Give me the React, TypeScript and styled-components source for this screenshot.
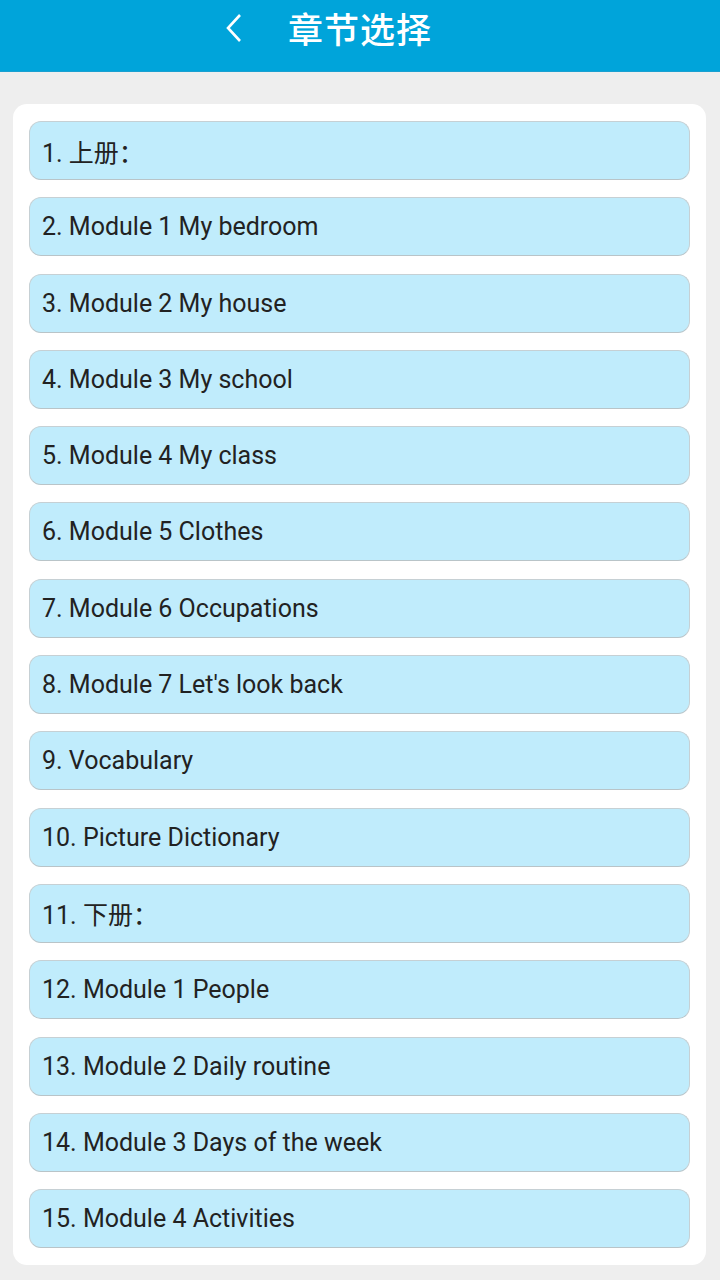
import { createGlobalStyle } from 'styled-components';
import styled from 'styled-components';

const GlobalStyle = createGlobalStyle`
    html, body {
        margin: 0;
        padding: 0;
        background: #eeeeee;
        font-family: Roboto, "Noto Sans CJK SC", sans-serif;
    }
`;

const chapters = [
    '1. 上册：',
    '2. Module 1 My bedroom',
    '3. Module 2 My house',
    '4. Module 3 My school',
    '5. Module 4 My class',
    '6. Module 5 Clothes',
    '7. Module 6 Occupations',
    "8. Module 7 Let's look back",
    '9. Vocabulary',
    '10. Picture Dictionary',
    '11. 下册：',
    '12. Module 1 People',
    '13. Module 2 Daily routine',
    '14. Module 3 Days of the week',
    '15. Module 4 Activities',
];

export default function App() {
    return (
        <Page>
            <GlobalStyle />
            <Header>
                <TitleWrap>
                    <BackButton aria-label="back">
                        <svg width="20" height="30" viewBox="0 0 20 30">
                            <path d="M16 2 L4 15 L16 28" fill="none" stroke="#fff" strokeWidth="2.6" />
                        </svg>
                    </BackButton>
                    <Title>章节选择</Title>
                </TitleWrap>
            </Header>
            <Body>
                <Card>
                    {chapters.map((c) => (
                        <Item key={c}>{c}</Item>
                    ))}
                </Card>
            </Body>
        </Page>
    );
}

const Page = styled.div`
    width: 720px;
    min-height: 1280px;
    background: #eeeeee;
`;

const Header = styled.header`
    height: 72px;
    background: #00a4da;
    border-bottom: 1px solid #1aa0d0;
    box-sizing: border-box;
    display: flex;
    justify-content: center;
    align-items: flex-start;
    padding-top: 10px;
`;

const TitleWrap = styled.div`
    position: relative;
    display: flex;
    align-items: center;
`;

const BackButton = styled.span`
    position: absolute;
    left: -64px;
    top: 50%;
    transform: translateY(-50%);
    display: flex;
`;

const Title = styled.h1`
    margin: 0;
    color: #ffffff;
    font-size: 35px;
    font-weight: 500;
    font-family: "Noto Sans CJK SC", sans-serif;
    letter-spacing: 1px;
    line-height: 36px;
`;

const Body = styled.main`
    padding: 32px 14px 14px 13px;
`;

const Card = styled.div`
    background: #ffffff;
    border-radius: 14px;
    padding: 17px 16px 17px 16px;
    display: flex;
    flex-direction: column;
    gap: 17.3px;
`;

const Item = styled.div`
    height: 59px;
    box-sizing: border-box;
    background: #c0ecfc;
    border: 1.5px solid #c6d0d4;
    border-bottom-color: #b9c4c8;
    border-radius: 12px;
    display: flex;
    align-items: center;
    padding-left: 12px;
    font-size: 25px;
    color: #222222;
    font-family: Roboto, "Noto Sans CJK SC", sans-serif;
`;
